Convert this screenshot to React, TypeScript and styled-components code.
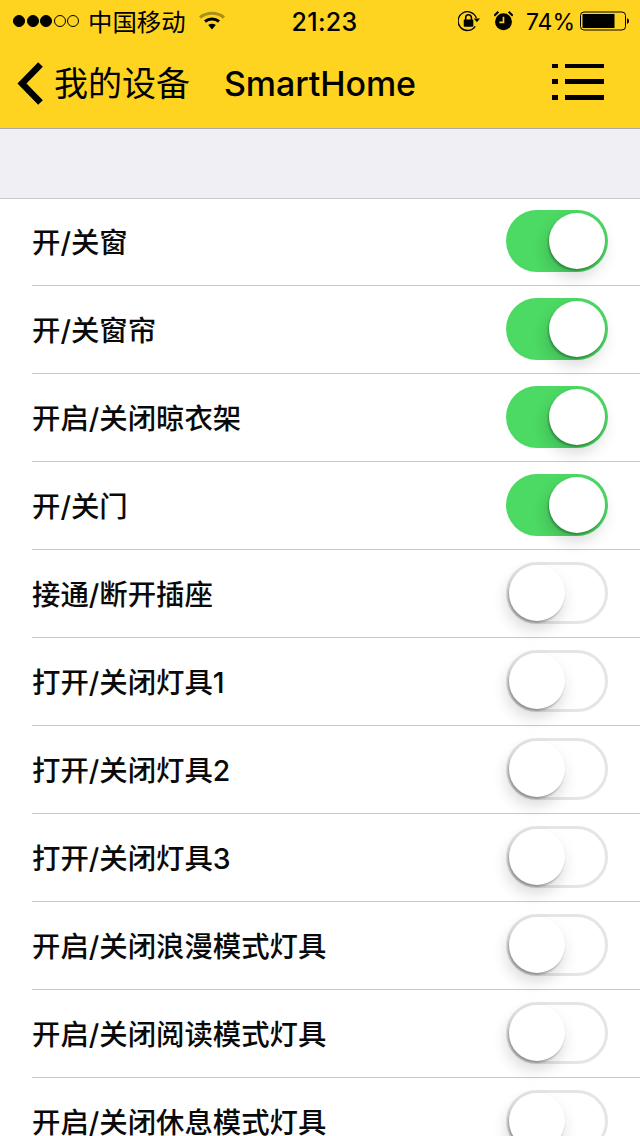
import React from "react";
import styled, { createGlobalStyle } from "styled-components";

const Global = createGlobalStyle`
  html, body { margin: 0; padding: 0; background: #fff; }
  body { font-family: Inter, "Noto Sans CJK SC", sans-serif; color: #000; }
`;

const Page = styled.div`
  width: 640px;
  height: 1136px;
  overflow: hidden;
  background: #fff;
`;

const Header = styled.header`
  height: 128px;
  background: #fed421;
  border-bottom: 1px solid #a9a9a9;
`;

const StatusBar = styled.div`
  height: 40px;
  display: grid;
  grid-template-columns: 1fr auto 1fr;
  align-items: center;
  padding: 0 11px 0 13px;
`;

const StatusLeft = styled.div`
  display: flex;
  align-items: center;
`;

const StatusRight = styled.div`
  display: flex;
  align-items: center;
  justify-content: flex-end;
  gap: 13px;
`;

const Dot = styled.span<{ $on: boolean }>`
  width: 12px;
  height: 12px;
  margin-right: 1.5px;
  border-radius: 50%;
  box-sizing: border-box;
  border: 1px solid #000;
  background: ${(p) => (p.$on ? "#000" : "transparent")};
`;

const Carrier = styled.span`
  font: 400 24.4px/40px "Noto Sans CJK SC", sans-serif;
  margin-left: 7.5px;
  margin-right: 13px;
`;

const Time = styled.span`
  font: 500 25px/40px Inter, sans-serif;
  letter-spacing: 0.3px;
  margin: 2px 0 0 7px;
`;

const Percent = styled.span`
  font: 400 23px/40px Inter, sans-serif;
  margin: 2px -8px 0 0;
`;

const NavBar = styled.div`
  height: 88px;
  display: flex;
  align-items: center;
  padding: 0 36px 0 17px;
`;

const BackLabel = styled.span`
  font: 400 34px/44px "Noto Sans CJK SC", sans-serif;
  margin-left: 11px;
  margin-top: -4px;
`;

const Title = styled.span`
  font: 500 34px/44px Inter, sans-serif;
  letter-spacing: -0.1px;
  margin-left: 34px;
  flex: 1;
`;

const Spacer = styled.div`
  height: 69px;
  background: #efeff4;
  border-bottom: 1px solid #c8c7cc;
`;

const List = styled.ul`
  list-style: none;
  margin: -1px 0 0;
  padding: 0 0 0 32px;
`;

const Row = styled.li`
  height: 87px;
  border-bottom: 1px solid #c8c7cc;
  display: flex;
  align-items: center;
  justify-content: space-between;
  padding-right: 32px;
`;

const Label = styled.span`
  font: 500 28.4px/36px Inter, "Noto Sans CJK SC", sans-serif;
  color: #0a0a0a;
  margin-top: 2px;
`;

const Track = styled.div<{ $on: boolean }>`
  position: relative;
  width: 102px;
  height: 62px;
  margin-top: -1px;
  box-sizing: border-box;
  border-radius: 31px;
  background: ${(p) => (p.$on ? "#4cd964" : "#fff")};
  border: ${(p) => (p.$on ? "none" : "3px solid #e5e5e5")};
`;

const Knob = styled.div<{ $on: boolean }>`
  position: absolute;
  width: 56px;
  height: 56px;
  border-radius: 50%;
  background: #fff;
  top: ${(p) => (p.$on ? "3px" : "0")};
  left: ${(p) => (p.$on ? "43px" : "0")};
  box-shadow: -1px 2px 2px rgba(0, 0, 0, 0.28), -2px 8px 16px rgba(0, 0, 0, 0.16);
`;

const Signal = () => (
  <>
    {[1, 1, 1, 0, 0].map((on, i) => (
      <Dot key={i} $on={!!on} />
    ))}
  </>
);

const Wifi = () => (
  <svg width="26" height="20" viewBox="0 0 26 20">
    <path d="M1 6.5C7.5 0.8 18.5 0.8 25 6.5" fill="none" stroke="#000" strokeOpacity="0.32" strokeWidth="3" />
    <path d="M6 10.5C10 7.3 16 7.3 20 10.5" fill="none" stroke="#000" strokeWidth="3" />
    <path d="M9.2 14L13 18.5 16.8 14C14.6 12.4 11.4 12.4 9.2 14Z" fill="#000" />
  </svg>
);

const RotationLock = () => (
  <svg width="23" height="22" viewBox="0 0 24 22">
    <path d="M19.2 8A9.8 9.8 0 1 0 18 16.6" fill="none" stroke="#000" strokeWidth="1.4" />
    <path d="M16.5 8.5H23L19.7 12.2Z" fill="#000" />
    <rect x="6" y="9.5" width="10" height="7.5" rx="1" fill="#000" />
    <path d="M8 10V7.5a3 3 0 0 1 6 0V10" fill="none" stroke="#000" strokeWidth="1.6" />
  </svg>
);

const Alarm = () => (
  <svg width="19" height="20" viewBox="0.8 0.5 18.4 19.4">
    <circle cx="10" cy="11" r="8.2" fill="#000" />
    <path d="M10 6V11.5H6" fill="none" stroke="#fed421" strokeWidth="1.6" />
    <path d="M1 5L5 1.2M19 5L15 1.2" stroke="#000" strokeWidth="2" />
  </svg>
);

const Battery = () => (
  <svg width="49" height="20" viewBox="0 0 49 20">
    <rect x="0.5" y="1" width="45" height="18" rx="3.5" fill="none" stroke="#000" strokeWidth="1" />
    <rect x="2.5" y="3" width="32" height="14" fill="#000" />
    <path d="M47 7.2C48.4 7.6 49 8.6 49 10S48.4 12.4 47 12.8Z" fill="#000" />
  </svg>
);

const BackChevron = () => (
  <svg width="26" height="44" viewBox="0 0 26 44">
    <path d="M23.5 2.5L5 21.5 23.5 40.5" fill="none" stroke="#000" strokeWidth="6.5" />
  </svg>
);

const MenuIcon = () => (
  <svg width="52" height="40" viewBox="0 1 52 40">
    <rect x="0" y="0" width="6" height="5" fill="#000" />
    <rect x="13" y="0" width="39" height="5" fill="#000" />
    <rect x="0" y="16" width="6" height="5" fill="#000" />
    <rect x="13" y="16" width="39" height="5" fill="#000" />
    <rect x="0" y="32" width="6" height="5" fill="#000" />
    <rect x="13" y="32" width="39" height="5" fill="#000" />
  </svg>
);

const items: [string, boolean][] = [
  ["开/关窗", true],
  ["开/关窗帘", true],
  ["开启/关闭晾衣架", true],
  ["开/关门", true],
  ["接通/断开插座", false],
  ["打开/关闭灯具1", false],
  ["打开/关闭灯具2", false],
  ["打开/关闭灯具3", false],
  ["开启/关闭浪漫模式灯具", false],
  ["开启/关闭阅读模式灯具", false],
  ["开启/关闭休息模式灯具", false],
];

export default function App() {
  return (
    <Page>
      <Global />
      <Header>
        <StatusBar>
          <StatusLeft>
            <Signal />
            <Carrier>中国移动</Carrier>
            <Wifi />
          </StatusLeft>
          <Time>21:23</Time>
          <StatusRight>
            <RotationLock />
            <Alarm />
            <Percent>74%</Percent>
            <Battery />
          </StatusRight>
        </StatusBar>
        <NavBar>
          <BackChevron />
          <BackLabel>我的设备</BackLabel>
          <Title>SmartHome</Title>
          <MenuIcon />
        </NavBar>
      </Header>
      <Spacer />
      <List>
        {items.map(([label, on]) => (
          <Row key={label}>
            <Label>{label}</Label>
            <Track $on={on}>
              <Knob $on={on} />
            </Track>
          </Row>
        ))}
      </List>
    </Page>
  );
}
